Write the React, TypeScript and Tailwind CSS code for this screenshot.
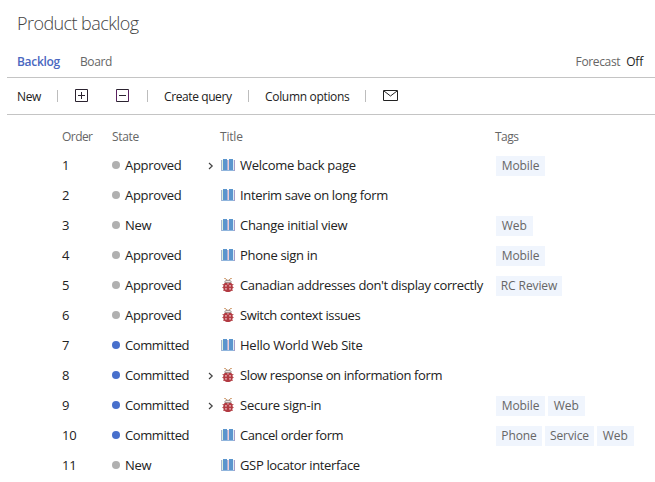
import React from "react";

type Item = {
  title: string;
  state: "Approved" | "New" | "Committed";
  bug?: boolean;
  parent?: boolean;
  tags?: string[];
  spacing: string;
};

const items: Item[] = [
  { title: "Welcome back page", state: "Approved", parent: true, tags: ["Mobile"], spacing: "tracking-[-0.28px]" },
  { title: "Interim save on long form", state: "Approved", spacing: "tracking-[-0.34px]" },
  { title: "Change initial view", state: "New", tags: ["Web"], spacing: "tracking-[-0.28px]" },
  { title: "Phone sign in", state: "Approved", tags: ["Mobile"], spacing: "tracking-[-0.3px]" },
  { title: "Canadian addresses don't display correctly", state: "Approved", bug: true, tags: ["RC Review"], spacing: "tracking-[-0.37px]" },
  { title: "Switch context issues", state: "Approved", bug: true, spacing: "tracking-[-0.4px]" },
  { title: "Hello World Web Site", state: "Committed", spacing: "tracking-[-0.24px]" },
  { title: "Slow response on information form", state: "Committed", bug: true, parent: true, spacing: "tracking-[-0.39px]" },
  { title: "Secure sign-in", state: "Committed", bug: true, parent: true, tags: ["Mobile", "Web"], spacing: "tracking-[-0.24px]" },
  { title: "Cancel order form", state: "Committed", tags: ["Phone", "Service", "Web"], spacing: "tracking-[-0.41px]" },
  { title: "GSP locator interface", state: "New", spacing: "tracking-[-0.35px]" },
];

const tagWidths: Record<string, string> = {
  Mobile: "w-[49px]",
  Web: "w-[36.500px]",
  "RC Review": "w-[66px]",
  Phone: "w-[46px]",
  Service: "w-[49px]",
};

const stateSpacing = {
  Approved: "tracking-[-0.32px]",
  New: "tracking-[-0.3px]",
  Committed: "tracking-[-0.42px]",
};

function BookIcon() {
  return (
    <svg className="block" width="14" height="14" viewBox="0 0 14 14" shapeRendering="crispEdges">
      <path d="M0 1h1v11H0z" fill="#a4b4d2" />
      <path d="M1 1h1v10H1z" fill="#dff0dc" />
      <path d="M13 1h1v11h-1z" fill="#a99cc8" />
      <path d="M12 1h1v10h-1z" fill="#dcecf6" />
      <path d="M1 11h12v1H1z" fill="#8fb5dd" />
      <path d="M2 0h4v11H2zM8 0h4v11H8z" fill="#5b95cd" />
      <path d="M6 1h1v10H6z" fill="#a9b4dc" />
      <path d="M7 1h1v10H7z" fill="#f1cdd2" />
    </svg>
  );
}

function BugIcon() {
  return (
    <svg className="mb-[2px] ml-px block" width="12" height="14" viewBox="0 0 12 14">
      <path d="M2.300.5h1.200l1.300 1.700M9.700.5H8.500L7.200 2.200" stroke="#c98a52" strokeWidth="1" fill="none" />
      <path d="M3 4.700V3.400l1-1.100h4l1 1.100v1.300z" fill="#efe3e2" stroke="#94827f" strokeWidth="1" />
      <path d="M.5 6.500h2M11.500 6.500h-2M.3 9.500h2M11.700 9.500h-2M1 12.300h2M11 12.300H9" stroke="#c2696b" strokeWidth="1" />
      <path d="M2.600 5h6.800c1 1.300 1.500 2.800 1.400 4.400-.1 2.300-1.600 4.600-4.800 4.600s-4.700-2.300-4.800-4.600C1.100 7.800 1.600 6.300 2.600 5z" fill="#b23a42" />
      <path d="M3.200 7.200h1.500v1.300H3.200zM7.300 7.200h1.500v1.300H7.300zM3.200 10.200h1.500v1.300H3.200zM7.300 10.200h1.500v1.300H7.300zM5.500 5.300h1v1.200h-1z" fill="#f6dfe0" />
    </svg>
  );
}

function Divider() {
  return <span className="h-3 w-px shrink-0 bg-[#bdbdbd]" />;
}

export default function App() {
  return (
    <main className="h-[482px] w-[655px] overflow-hidden bg-white font-['Open_Sans',sans-serif] text-[13px] text-[#222] whitespace-nowrap">
      <h1 className="flex h-[46px] items-center pl-[17px] text-[18px] font-light text-[#444]">
        <span className="tracking-[-0.57px]">Product backlog</span>
      </h1>
      <nav className="ml-[7px] flex h-8 items-center border-b border-[#c4c4c4] pl-[10px] text-[12px] text-[#666]">
        <span className="w-[63px] font-semibold tracking-[-0.3px] text-[#4a67c0]">Backlog</span>
        <span className="tracking-[-0.4px]">Board</span>
        <span className="ml-auto tracking-[-0.36px]">Forecast</span>
        <span className="ml-[6px] mr-[12px] text-[#222] tracking-[-0.2px]">Off</span>
      </nav>
      <div className="ml-[7px] flex h-[37px] items-center border-b border-[#c4c4c4] pl-[10px] text-[12px]">
        <span className="w-[40px] pt-px tracking-[-0.4px]">New</span>
        <Divider />
        <svg className="mb-px ml-[17px]" width="13" height="13" viewBox="0 0 13 13" fill="none" stroke="#2b2330">
          <path d="M.5.5h12v12H.5zM3 6.500h7M6.500 3v7" />
        </svg>
        <svg className="mb-px ml-[28px] mr-[18px]" width="13" height="13" viewBox="0 0 13 13" fill="none" stroke="#2b2330">
          <path d="M.5.5h12v12H.5zM3 6.500h7" />
          <path d="M.5 1v11M12.500 1v11" stroke="#5a2260" />
        </svg>
        <Divider />
        <span className="ml-[16px] w-[84px] pt-px tracking-[-0.4px]">Create query</span>
        <Divider />
        <span className="ml-[16px] w-[100px] pt-px tracking-[-0.32px]">Column options</span>
        <Divider />
        <svg className="mb-px ml-[17px]" width="15" height="11" viewBox="0 0 15 11" fill="none" stroke="#222">
          <path d="M.5.5h14v10H.5z" />
          <path d="M1 1l6.500 5L14 1" />
        </svg>
      </div>
      <section className="pt-[7px]">
        <div className="flex h-[29px] items-center pl-[62px] text-[12px] text-[#666]">
          <span className="w-[50px] tracking-[-0.55px]">Order</span>
          <span className="w-[108px] tracking-[-0.35px]">State</span>
          <span className="w-[275px] tracking-[-0.2px]">Title</span>
          <span className="tracking-[-0.5px]">Tags</span>
        </div>
        {items.map((item, index) => (
          <div key={item.title} className="flex h-[30px] items-center pl-[62px]">
            <span className="w-[50px] tracking-[-0.3px]">{index + 1}</span>
            <span className={`mb-[2px] mr-[5px] size-2 rounded-full ${item.state === "Committed" ? "bg-[#4870cc]" : "bg-[#b0b0b0]"}`} />
            <span className={`w-[83px] ${stateSpacing[item.state]}`}>{item.state}</span>
            <span className="flex w-[13px]">
              {item.parent && (
                <svg width="6" height="8" viewBox="0 0 6 8" fill="none" stroke="#444" strokeWidth="1.200">
                  <path d="M1 1l3.200 3L1 7" />
                </svg>
              )}
            </span>
            <span className="flex w-[19px]">{item.bug ? <BugIcon /> : <BookIcon />}</span>
            <span className={`w-[256px] ${item.spacing}`}>{item.title}</span>
            <span className="flex gap-[3px] text-[12px] text-[#666]">
              {item.tags?.map((tag) => (
                <span key={tag} className={`flex h-5 items-center justify-center bg-[#f0f5fd] tracking-[-0.1px] ${tagWidths[tag]}`}>
                  {tag}
                </span>
              ))}
            </span>
          </div>
        ))}
      </section>
    </main>
  );
}
